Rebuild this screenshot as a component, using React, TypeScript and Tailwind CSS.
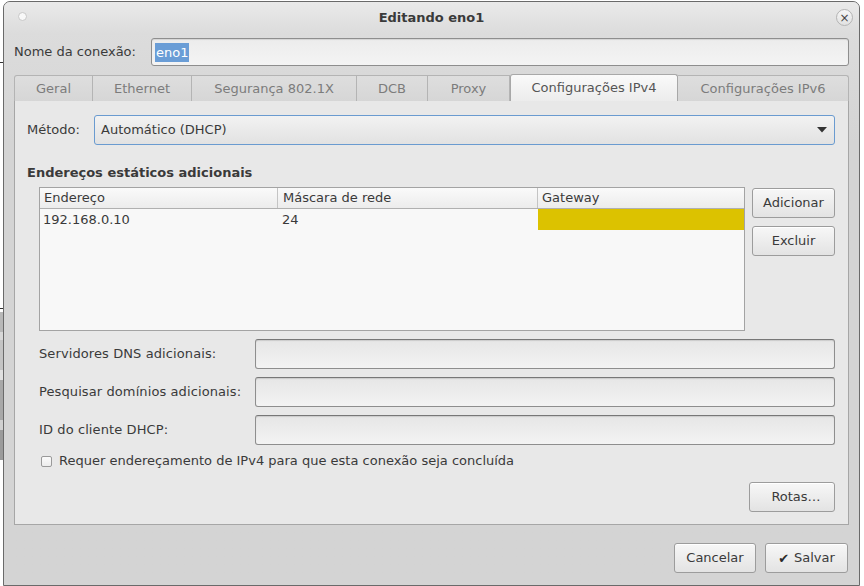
import React from "react";

const font = { fontFamily: '"DejaVu Sans", "Liberation Sans", sans-serif' };

function Btn({ children, className = "" }: { children: React.ReactNode; className?: string }) {
  return (
    <div
      className={
        "flex items-center justify-center rounded-[3px] border border-[#9c9c9c] bg-gradient-to-b from-[#f7f7f7] to-[#e3e3e3] text-[13px] text-[#3a3a3a] shadow-[inset_0_1px_0_#ffffff] " +
        className
      }
    >
      {children}
    </div>
  );
}

function Field({ className = "" }: { className?: string }) {
  return (
    <div
      className={
        "rounded-[3px] border border-[#8e8e8e] border-t-[#777] bg-gradient-to-b from-[#e6e6e6] to-[#f3f3f3] shadow-[inset_0_1px_1px_rgba(0,0,0,0.12)] " +
        className
      }
    />
  );
}

const tabs = [
  { label: "Geral", w: 79 },
  { label: "Ethernet", w: 99 },
  { label: "Segurança 802.1X", w: 165 },
  { label: "DCB", w: 71 },
  { label: "Proxy", w: 82 },
  { label: "Configurações IPv4", w: 168, active: true },
  { label: "Configurações IPv6", w: 171 },
];

export default function App() {
  return (
    <div className="relative h-[586px] w-[864px] overflow-hidden bg-white" style={font}>
      {/* desktop fragments behind the window */}
      <div className="absolute left-0 top-[62px] h-[1px] w-[3px] bg-[#333]" />
      <div className="absolute left-0 top-[308px] h-[1px] w-[3px] bg-[#333]" />
      <div className="absolute left-0 top-[312px] flex w-[3px] flex-col">
        <div className="h-[20px] bg-[#b8b8b8]" />
        <div className="h-[8px] bg-[#d8d8d8]" />
        <div className="h-[30px] bg-[#c4c4c4]" />
        <div className="h-[10px] bg-[#e0e0e0]" />
        <div className="h-[40px] bg-[#a8a8a8]" />
        <div className="h-[10px] bg-[#d0d0d0]" />
        <div className="h-[30px] bg-[#9a9a9a]" />
      </div>

      {/* window */}
      <div className="ml-[3px] mt-[1px] flex h-[585px] w-[857px] flex-col rounded-t-[7px] border border-[#6a6a6a] bg-[#d4d4d4]">
        {/* title bar */}
        <div className="relative flex h-[31px] items-center justify-center rounded-t-[6px] bg-gradient-to-b from-[#eaeaea] to-[#dcdcdc]">
          <div className="absolute left-[14px] top-[10px] h-[9px] w-[9px] rounded-full border border-[#c8c8c8] bg-[#f8f8f8]" />
          <span className="text-[13px] font-bold text-[#3a3a3a]">Editando eno1</span>
          <div className="absolute right-[6px] top-[7px] flex h-[17px] w-[17px] items-center justify-center rounded-full border border-[#b4b4b4] bg-gradient-to-b from-[#f6f6f6] to-[#e2e2e2] text-[12px] leading-none text-[#444]">
            ×
          </div>
        </div>

        {/* body */}
        <div className="flex flex-1 flex-col bg-gradient-to-b from-[#dcdcdc] to-[#d4d4d4] to-[20%] px-[10px]">
          {/* name row */}
          <div className="mt-[5px] flex h-[28px] items-center">
            <span className="w-[137px] text-[13px] text-[#3a3a3a]">Nome da conexão:</span>
            <div className="flex h-[28px] flex-1 items-center rounded-[3px] border border-[#8e8e8e] bg-gradient-to-b from-[#ececec] to-[#f4f4f4] px-[3px] shadow-[inset_0_1px_1px_rgba(0,0,0,0.1)]">
              <span className="bg-[#6a9dd6] px-[1px] text-[13px] leading-[19px] text-white">eno1</span>
            </div>
          </div>

          {/* notebook */}
          <div className="mt-[8px] flex flex-col">
            <div className="flex h-[27px] items-end">
              {tabs.map((t, i) =>
                t.active ? (
                  <div
                    key={t.label}
                    style={{ width: t.w }}
                    className="flex h-[27px] items-center justify-center rounded-t-[3px] border border-b-0 border-[#a8a8a8] bg-gradient-to-b from-[#fafafa] to-[#ececec] text-[13px] text-[#555]"
                  >
                    {t.label}
                  </div>
                ) : (
                  <div
                    key={t.label}
                    style={{ width: t.w }}
                    className={
                      "flex h-[26px] items-center justify-center border-t border-r border-[#b4b4b4] bg-gradient-to-b from-[#dedede] to-[#d6d6d6] text-[13px] text-[#7c7c7c] " +
                      (i === 0 ? "rounded-tl-[3px] border-l " : "") +
                      (i === tabs.length - 1 ? "rounded-tr-[3px] " : "")
                    }
                  >
                    {t.label}
                  </div>
                )
              )}
            </div>

            {/* panel */}
            <div className="flex h-[424px] flex-col border border-t-0 border-[#a6a6a6] bg-[#e8e8e8] pl-[12px] pr-[13px]">
              {/* method */}
              <div className="mt-[14px] flex h-[30px] items-center">
                <span className="w-[67px] text-[13px] text-[#3a3a3a]">Método:</span>
                <div className="flex h-[30px] flex-1 items-center justify-between rounded-[3px] border border-[#6a9bd0] bg-gradient-to-b from-[#f2f2f2] to-[#e2e2e2] pl-[6px] pr-[7px] text-[13px] text-[#3a3a3a]">
                  <span>Automático (DHCP)</span>
                  <svg width="10" height="6" viewBox="0 0 10 6">
                    <path d="M0 0 L10 0 L5 5.5 Z" fill="#333" />
                  </svg>
                </div>
              </div>

              <div className="mt-[20px] text-[13px] font-bold leading-[16px] text-[#3a3a3a]">
                Endereços estáticos adicionais
              </div>

              {/* table + buttons */}
              <div className="mt-[6px] flex pl-[12px]">
                <div className="flex h-[144px] w-[706px] flex-col border border-[#a3a3a3] bg-[#f8f8f8]">
                  <div className="flex h-[21px] border-b border-[#b0b0b0] bg-gradient-to-b from-[#fafafa] to-[#ececec] text-[13px] text-[#3a3a3a]">
                    <div className="flex w-[238px] items-center border-r border-[#c4c4c4] pl-[4px]">Endereço</div>
                    <div className="flex w-[260px] items-center border-r border-[#c4c4c4] pl-[5px]">Máscara de rede</div>
                    <div className="flex flex-1 items-center pl-[4px]">Gateway</div>
                  </div>
                  <div className="flex h-[21px] text-[13px] text-[#3a3a3a]">
                    <div className="flex w-[238px] items-center pl-[3px] pt-[1px]">192.168.0.10</div>
                    <div className="flex w-[260px] items-center pl-[4px] pt-[1px]">24</div>
                    <div className="flex-1 bg-[#dcc200]" />
                  </div>
                </div>
                <div className="ml-[7px] flex flex-col">
                  <Btn className="mt-[1px] h-[30px] w-[83px]">Adicionar</Btn>
                  <Btn className="mt-[8px] h-[30px] w-[83px]">Excluir</Btn>
                </div>
              </div>

              {/* extra fields */}
              <div className="mt-[8px] flex flex-col gap-[8px] pl-[12px]">
                {["Servidores DNS adicionais:", "Pesquisar domínios adicionais:", "ID do cliente DHCP:"].map((l) => (
                  <div key={l} className="flex h-[30px] items-center">
                    <span className="w-[216px] text-[13px] tracking-[0.1px] text-[#3a3a3a]">{l}</span>
                    <Field className="h-[30px] flex-1" />
                  </div>
                ))}
              </div>

              <div className="mt-[8px] flex h-[16px] items-center pl-[14px]">
                <div className="h-[11px] w-[11px] rounded-[2px] border border-[#9a9a9a] bg-gradient-to-b from-[#fbfbfb] to-[#ececec]" />
                <span className="ml-[7px] text-[13px] text-[#3a3a3a]">
                  Requer endereçamento de IPv4 para que esta conexão seja concluída
                </span>
              </div>

              <div className="mt-[13px] flex justify-end">
                <Btn className="h-[30px] w-[86px] pl-[8px]">Rotas…</Btn>
              </div>
            </div>
          </div>

          {/* bottom buttons */}
          <div className="mt-[18px] flex justify-end gap-[9px] pr-[1px]">
            <Btn className="h-[30px] w-[82px]">Cancelar</Btn>
            <Btn className="h-[30px] w-[83px] gap-[5px]">
              <span className="text-[13px] leading-none text-[#2a2a2a]">✔</span>
              <span>Salvar</span>
            </Btn>
          </div>
        </div>
      </div>
    </div>
  );
}
